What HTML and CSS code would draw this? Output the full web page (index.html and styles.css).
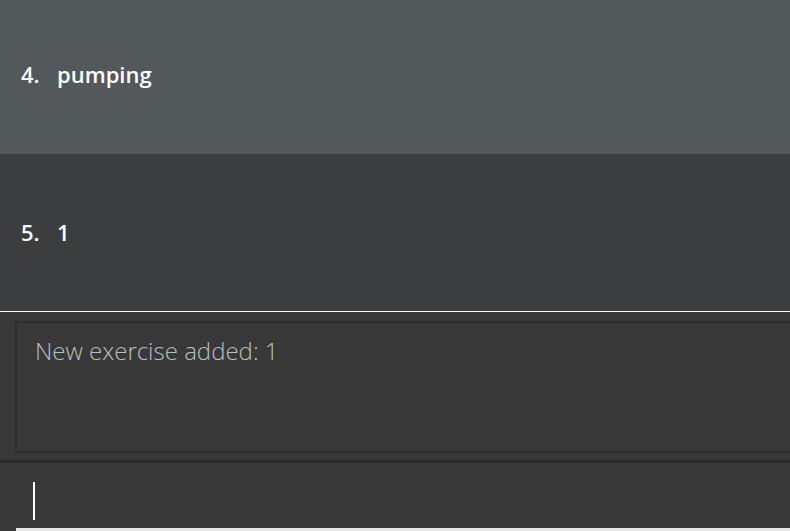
FILE: index.html
```html
<!DOCTYPE html>
<html>
<head>
<meta charset="utf-8">
<link rel="stylesheet" href="styles.css">
</head>
<body>
<div class="app">
  <ul class="list">
    <li class="row row-light"><span class="idx">4.</span><span class="name">pumping</span></li>
    <li class="row row-dark"><span class="idx">5.</span><span class="name">1</span></li>
  </ul>
  <div class="divider"></div>
  <div class="result-wrap">
    <div class="result">New exercise added: 1</div>
  </div>
  <div class="sep"></div>
  <div class="command">
    <div class="caret"></div>
  </div>
  <div class="command-line"></div>
</div>
</body>
</html>
```
FILE: styles.css
```css
html, body {
  margin: 0;
  padding: 0;
  background: #383838;
  width: 790px;
  height: 531px;
  overflow: hidden;
}
.app {
  display: flex;
  flex-direction: column;
  height: 531px;
  font-family: "Open Sans", "Noto Sans", sans-serif;
}
.list {
  list-style: none;
  margin: 0;
  padding: 0;
}
.row {
  display: flex;
  align-items: center;
  padding-left: 21px;
  color: #ffffff;
  font-size: 22px;
  font-weight: 600;
  box-sizing: border-box;
}
.row-light {
  height: 154px;
  padding-bottom: 6px;
  background: #53585b;
}
.row-dark {
  height: 157px;
  padding-bottom: 2px;
  background: #3c3d3f;
}
.idx {
  width: 36px;
}
.divider {
  height: 1px;
  background: #ffffff;
}
.result-wrap {
  padding: 9px 0 0 15px;
  height: 148px;
  box-sizing: border-box;
}
.result {
  height: 132px;
  box-sizing: border-box;
  border-top: 2px solid #2d2d2d;
  border-left: 2px solid #2d2d2d;
  border-bottom: 2px solid #2d2d2d;
  padding: 11px 0 0 18px;
  color: #b9bec1;
  font-size: 24px;
  font-weight: 300;
  background: #383838;
}
.sep {
  height: 3px;
  background: #2b2b2b;
}
.command {
  height: 65px;
  padding: 19px 0 0 33px;
  box-sizing: border-box;
}
.caret {
  width: 2px;
  height: 38px;
  background: #ffffff;
}
.command-line {
  height: 3px;
  margin-left: 16px;
  background: #e8e8e8;
}
```
